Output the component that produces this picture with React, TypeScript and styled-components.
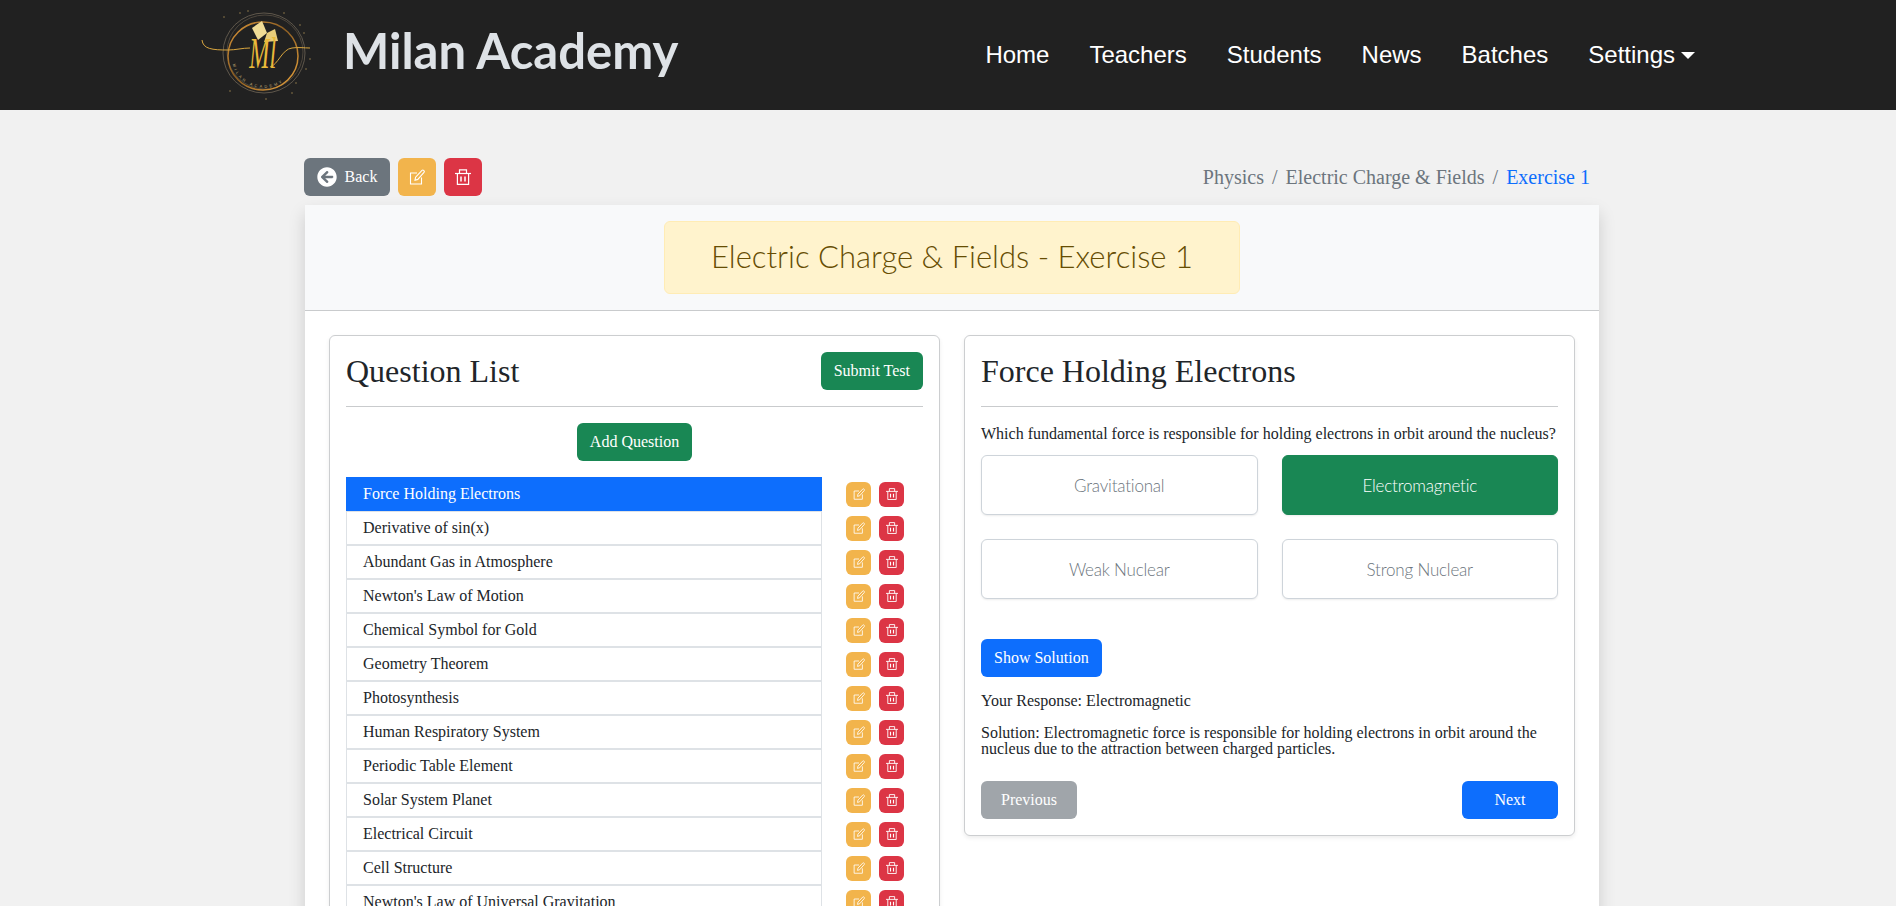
import styled, { createGlobalStyle } from 'styled-components';
import { FaArrowCircleLeft } from 'react-icons/fa';

const GlobalStyle = createGlobalStyle`
  html, body {
    margin: 0;
    padding: 0;
    overflow: hidden;
    height: 906px;
  }
  body {
    background: #f1f1f1;
    font-family: "Liberation Serif", "Times New Roman", serif;
    color: #212529;
  }
  * {
    box-sizing: border-box;
  }
`;

const Navbar = styled.nav`
  display: flex;
  align-items: center;
  height: 110px;
  padding: 0 201px 0 200px;
  background: #212121;
`;

const Brand = styled.div`
  display: flex;
  align-items: center;
  gap: 27px;
`;

const BrandName = styled.span`
  margin-bottom: 10px;
  font-family: Lato, sans-serif;
  font-size: 49px;
  font-weight: 700;
  color: #dee2e6;
  line-height: 1;
`;

const NavLinks = styled.div`
  display: flex;
  align-items: center;
  gap: 40px;
  margin-left: auto;
  font-family: "Liberation Sans", Arial, sans-serif;
  font-size: 24px;
  color: #fff;
`;

const NavLink = styled.a`
  display: flex;
  align-items: center;
`;

const Caret = styled.span`
  margin-left: 6px;
  border-top: 7px solid #fff;
  border-left: 7px solid transparent;
  border-right: 7px solid transparent;
`;

const Page = styled.div`
  width: 1294px;
  margin: 48px 0 0 305px;
`;

const TopBar = styled.div`
  display: flex;
  align-items: center;
  justify-content: space-between;
  margin: 0 0 9px -1px;
`;

const TopActions = styled.div`
  display: flex;
  gap: 8px;
`;

const Button = styled.button<{ $bg: string }>`
  display: inline-flex;
  align-items: center;
  justify-content: center;
  height: 38px;
  padding: 0 13px;
  border: none;
  border-radius: 6px;
  background: ${props => props.$bg};
  color: #fff;
  font-family: inherit;
  font-size: 16px;
`;

const BackButton = styled(Button)`
  width: 86px;
  gap: 8px;
  padding: 0;
`;

const IconButton = styled(Button)<{ $small?: boolean }>`
  width: ${props => (props.$small ? '25px' : '38px')};
  height: ${props => (props.$small ? '25px' : '38px')};
  padding: 0;
`;

const Breadcrumb = styled.div`
  display: flex;
  gap: 8px;
  padding-right: 9px;
  font-size: 20px;
  color: #6c757d;
`;

const Crumb = styled.span<{ $active?: boolean }>`
  color: ${props => (props.$active ? '#0d6efd' : '#6c757d')};
`;

const MainCard = styled.div`
  background: #fff;
  box-shadow: 0 8px 16px rgba(0, 0, 0, 0.15);
  min-height: 800px;
`;

const MainHeader = styled.div`
  display: flex;
  justify-content: center;
  padding: 16px 0;
  background: #f8f9fa;
  border-bottom: 1px solid #c9cbcd;
`;

const TitleAlert = styled.div`
  display: flex;
  align-items: center;
  justify-content: center;
  width: 576px;
  height: 73px;
  padding-bottom: 3px;
  background: #fff3cd;
  border: 1px solid #ffecb5;
  border-radius: 6px;
  color: #664d03;
  font-family: Lato, sans-serif;
  font-weight: 300;
  font-size: 31px;
`;

const Columns = styled.div`
  display: grid;
  grid-template-columns: 611px 611px;
  gap: 24px;
  align-items: start;
  padding: 24px;
`;

const Panel = styled.div`
  padding: 16px;
  background: #fff;
  border: 1px solid #ccced0;
  border-radius: 6px;
  box-shadow: 0 2px 4px rgba(0, 0, 0, 0.075);
`;

const PanelHeader = styled.div`
  display: flex;
  align-items: center;
  justify-content: space-between;
  height: 38px;
`;

const PanelTitle = styled.h2`
  margin: 0;
  font-size: 32px;
  font-weight: 400;
  line-height: 1.2;
`;

const Rule = styled.hr`
  height: 1px;
  margin: 16px 0;
  border: none;
  background: #c9cbcd;
`;

const CenterRow = styled.div`
  display: flex;
  justify-content: center;
  margin-bottom: 16px;
`;

const QuestionRow = styled.div`
  display: flex;
  align-items: center;
  height: 34px;
`;

const QuestionItem = styled.div<{ $active?: boolean }>`
  display: flex;
  align-items: center;
  width: 476px;
  height: 34px;
  padding-left: 16px;
  font-size: 16px;
  background: ${props => (props.$active ? '#0d6efd' : '#fff')};
  color: ${props => (props.$active ? '#fff' : '#212529')};
  border: 1px solid ${props => (props.$active ? '#0d6efd' : '#dee2e6')};
`;

const RowActions = styled.div`
  display: flex;
  gap: 8px;
  margin-left: 24px;
`;

const QuestionText = styled.p`
  margin: 0 0 10px;
  font-size: 16px;
  line-height: 22px;
`;

const Options = styled.div`
  display: grid;
  grid-template-columns: 1fr 1fr;
  gap: 24px;
  margin-bottom: 40px;
`;

const Option = styled.div<{ $selected?: boolean }>`
  display: flex;
  align-items: center;
  justify-content: center;
  height: 60px;
  border-radius: 6px;
  border: 1px solid ${props => (props.$selected ? '#198754' : '#ced4da')};
  background: ${props => (props.$selected ? '#198754' : '#fff')};
  color: ${props => (props.$selected ? '#fff' : '#6c757d')};
  font-family: Lato, sans-serif;
  font-weight: 300;
  font-size: 17px;
  letter-spacing: -0.2px;
  box-shadow: 0 1px 2px rgba(0, 0, 0, 0.08);
`;

const Answer = styled.p`
  margin: 16px 0 0;
  font-size: 16px;
  line-height: 16px;
`;

const Pager = styled.div`
  display: flex;
  justify-content: space-between;
  margin-top: 24px;
`;

const PagerButton = styled(Button)`
  width: 96px;
  padding: 0;
`;

const questions = [
  'Force Holding Electrons',
  'Derivative of sin(x)',
  'Abundant Gas in Atmosphere',
  "Newton's Law of Motion",
  'Chemical Symbol for Gold',
  'Geometry Theorem',
  'Photosynthesis',
  'Human Respiratory System',
  'Periodic Table Element',
  'Solar System Planet',
  'Electrical Circuit',
  'Cell Structure',
  "Newton's Law of Universal Gravitation",
];

const options = ['Gravitational', 'Electromagnetic', 'Weak Nuclear', 'Strong Nuclear'];

const EditIcon = ({ size }: { size: number }) => (
  <svg width={size} height={size} viewBox="0 0 16 16" fill="none" stroke="#fff" strokeWidth="1.1">
    <path d="M12.5 8.5V15H1.5V4H8" />
    <path d="M6 11.2L6.6 8.2L13 1.4C13.5 .9 14.1 .9 14.6 1.4L15 1.8C15.5 2.3 15.5 2.9 15 3.4L8.8 10.4Z" />
  </svg>
);

const TrashIcon = ({ size }: { size: number }) => (
  <svg width={size} height={size} viewBox="0 0 16 16" fill="none" stroke="#fff" strokeWidth="1.2">
    <path d="M0 4.5H16" />
    <path d="M4.5 4.5V.8H11.5V4.5" />
    <path d="M2.4 4.5V15.4H13.6V4.5" />
    <path d="M6 7.5V12.5M10 7.5V12.5" strokeWidth="1.5" />
  </svg>
);

const Logo = () => (
  <svg width="116" height="100" viewBox="0 0 116 100" fill="none">
    <defs>
      <linearGradient id="ring" x1="0" y1="0" x2="1" y2="1">
        <stop offset="0" stopColor="#e09a3a" />
        <stop offset="0.45" stopColor="#8a5c22" />
        <stop offset="1" stopColor="#f0a83e" />
      </linearGradient>
      <path id="arc" d="M33 59 A31 27 0 0 0 94 62" />
    </defs>
    <ellipse cx="64" cy="48" rx="41" ry="40" stroke="#5f574b" strokeWidth="1" />
    <ellipse cx="65" cy="47" rx="38" ry="37" stroke="#4d463c" strokeWidth="1" />
    <ellipse cx="63" cy="51" rx="35" ry="34" stroke="url(#ring)" strokeWidth="1.5" />
    <path d="M2 35 C3 44 12 45 28 45 C36 45 42 43 50 43" stroke="#d9a63f" strokeWidth="1" />
    <path d="M70 62 C78 60 82 44 92 43 C98 42 104 43 110 43" stroke="#d9a63f" strokeWidth="1" />
    <path d="M52 23 L62 16 L67 28 L58 35 Z" fill="#f0dc95" />
    <path d="M67 28 L75 24 L78 36 L64 37 Z" fill="#e8cd7a" />
    <text
      x="114"
      y="63"
      textAnchor="middle"
      transform="scale(0.55 1)"
      fontFamily='"Liberation Serif", serif'
      fontStyle="italic"
      fontSize="44"
      fill="#e9b93a"
    >
      Ml
    </text>
    <text fontFamily='"Liberation Sans", sans-serif' fontSize="4" letterSpacing="2.4" fill="#b9a272">
      <textPath href="#arc">MILAN ACADEMY</textPath>
    </text>
    {[[24, 12], [48, 6], [84, 8], [104, 28], [106, 64], [92, 88], [66, 94], [30, 86], [100, 20], [110, 54], [40, 8], [96, 78]].map(([cx, cy]) => (
      <circle key={`${cx}-${cy}`} cx={cx} cy={cy} r="0.7" fill="#a98d55" />
    ))}
  </svg>
);

export default function App() {
  return (
    <>
      <GlobalStyle />
      <Navbar>
        <Brand>
          <Logo />
          <BrandName>Milan Academy</BrandName>
        </Brand>
        <NavLinks>
          <NavLink>Home</NavLink>
          <NavLink>Teachers</NavLink>
          <NavLink>Students</NavLink>
          <NavLink>News</NavLink>
          <NavLink>Batches</NavLink>
          <NavLink>
            Settings
            <Caret />
          </NavLink>
        </NavLinks>
      </Navbar>
      <Page>
        <TopBar>
          <TopActions>
            <BackButton $bg="#6c757d">
              <FaArrowCircleLeft size={20} />
              Back
            </BackButton>
            <IconButton $bg="#f2b44c">
              <EditIcon size={16} />
            </IconButton>
            <IconButton $bg="#dc3545">
              <TrashIcon size={16} />
            </IconButton>
          </TopActions>
          <Breadcrumb>
            <Crumb>Physics</Crumb>
            <span>/</span>
            <Crumb>Electric Charge &amp; Fields</Crumb>
            <span>/</span>
            <Crumb $active>Exercise 1</Crumb>
          </Breadcrumb>
        </TopBar>
        <MainCard>
          <MainHeader>
            <TitleAlert>Electric Charge &amp; Fields - Exercise 1</TitleAlert>
          </MainHeader>
          <Columns>
            <Panel>
              <PanelHeader>
                <PanelTitle>Question List</PanelTitle>
                <Button $bg="#198754">Submit Test</Button>
              </PanelHeader>
              <Rule />
              <CenterRow>
                <Button $bg="#198754">Add Question</Button>
              </CenterRow>
              {questions.map((q, i) => (
                <QuestionRow key={q}>
                  <QuestionItem $active={i === 0}>{q}</QuestionItem>
                  <RowActions>
                    <IconButton $small $bg="#f2b44c">
                      <EditIcon size={12} />
                    </IconButton>
                    <IconButton $small $bg="#dc3545">
                      <TrashIcon size={12} />
                    </IconButton>
                  </RowActions>
                </QuestionRow>
              ))}
            </Panel>
            <Panel>
              <PanelHeader>
                <PanelTitle>Force Holding Electrons</PanelTitle>
              </PanelHeader>
              <Rule />
              <QuestionText>Which fundamental force is responsible for holding electrons in orbit around the nucleus?</QuestionText>
              <Options>
                {options.map((o, i) => (
                  <Option key={o} $selected={i === 1}>
                    {o}
                  </Option>
                ))}
              </Options>
              <Button $bg="#0d6efd">Show Solution</Button>
              <Answer>Your Response: Electromagnetic</Answer>
              <Answer>
                Solution: Electromagnetic force is responsible for holding electrons in orbit around the nucleus due to the
                attraction between charged particles.
              </Answer>
              <Pager>
                <PagerButton $bg="#a0a5aa">Previous</PagerButton>
                <PagerButton $bg="#0d6efd">Next</PagerButton>
              </Pager>
            </Panel>
          </Columns>
        </MainCard>
      </Page>
    </>
  );
}
